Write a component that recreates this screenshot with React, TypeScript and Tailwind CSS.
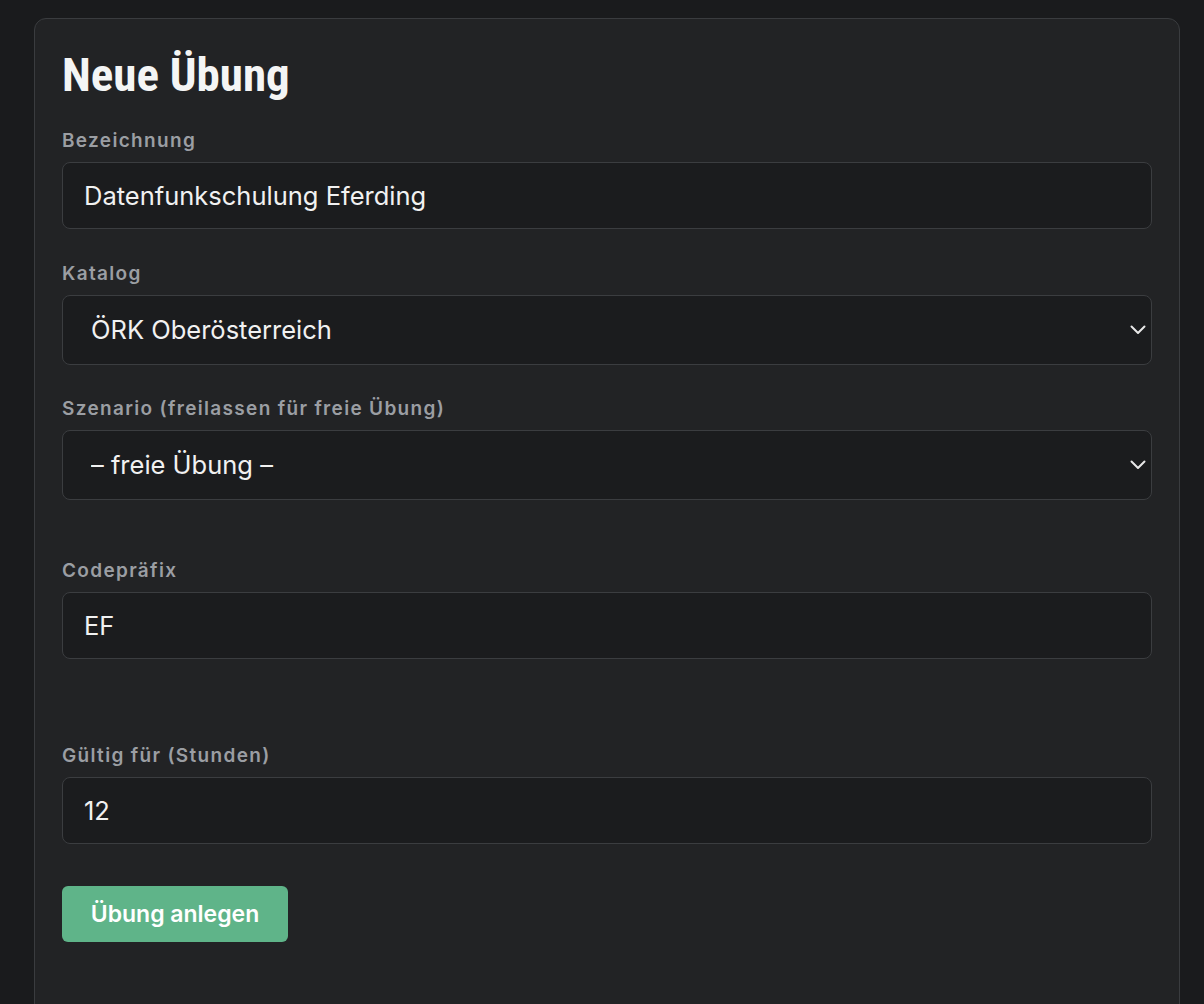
import { useState } from 'react';

const inter = { fontFamily: 'Inter, "Noto Sans", sans-serif' };

function Label({ children }: { children: React.ReactNode }) {
  return (
    <label className="block text-[19px] leading-[24px] font-semibold tracking-[0.07em] text-[#9b9ea3] mb-[9px]">
      {children}
    </label>
  );
}

function Chevron() {
  return (
    <svg className="pointer-events-none absolute right-[6px] top-1/2 -translate-y-1/2" width="16" height="10" viewBox="0 0 16 10" fill="none">
      <path d="M1.5 1.5 L8 8 L14.5 1.5" stroke="#e8e8e8" strokeWidth="2" strokeLinecap="round" strokeLinejoin="round" />
    </svg>
  );
}

export default function App() {
  const [name, setName] = useState('Datenfunkschulung Eferding');
  const [prefix, setPrefix] = useState('EF');
  const [hours, setHours] = useState('12');

  const inputCls =
    'block w-full h-[67px] px-[21px] bg-[#1b1c1e] border border-[#3b3d40] rounded-[8px] text-[25.5px] text-[#f1f1f1] outline-none';
  const selectCls =
    'block w-full h-[70px] pl-[28px] pr-10 bg-[#1b1c1e] border border-[#3b3d40] rounded-[8px] text-[25.5px] text-[#f1f1f1] outline-none appearance-none';

  return (
    <div className="min-h-[1004px] bg-[#1a1b1d] pl-[34px] pr-[24px] pt-[18px]" style={inter}>
      <div className="bg-[#222325] border border-[#3a3c3f] rounded-[12px] px-[27px] pt-[27px] pb-[90px]">
        <h1
          className="text-[47px] leading-[57px] font-bold text-[#f4f5f5] mb-[26px] [font-stretch:75%]"
          style={{ fontFamily: '"Roboto Condensed", Roboto, "DejaVu Sans Condensed", sans-serif' }}
        >
          Neue Übung
        </h1>

        <div className="mb-[33px]">
          <Label>Bezeichnung</Label>
          <input className={inputCls} value={name} onChange={(e) => setName(e.target.value)} />
        </div>

        <div className="mb-[32px]">
          <Label>Katalog</Label>
          <div className="relative">
            <select className={selectCls} defaultValue="ooe">
              <option value="ooe">ÖRK Oberösterreich</option>
            </select>
            <Chevron />
          </div>
        </div>

        <div className="mb-[59px]">
          <Label>Szenario (freilassen für freie Übung)</Label>
          <div className="relative">
            <select className={selectCls} defaultValue="">
              <option value="">– freie Übung –</option>
            </select>
            <Chevron />
          </div>
        </div>

        <div className="mb-[85px]">
          <Label>Codepräfix</Label>
          <input className={inputCls} value={prefix} onChange={(e) => setPrefix(e.target.value)} />
        </div>

        <div className="mb-[42px]">
          <Label>Gültig für (Stunden)</Label>
          <input className={inputCls} value={hours} onChange={(e) => setHours(e.target.value)} />
        </div>

        <button className="h-[56px] w-[226px] rounded-[6px] bg-[#5fb489] text-white text-[23px] font-semibold">
          Übung anlegen
        </button>
      </div>
    </div>
  );
}
